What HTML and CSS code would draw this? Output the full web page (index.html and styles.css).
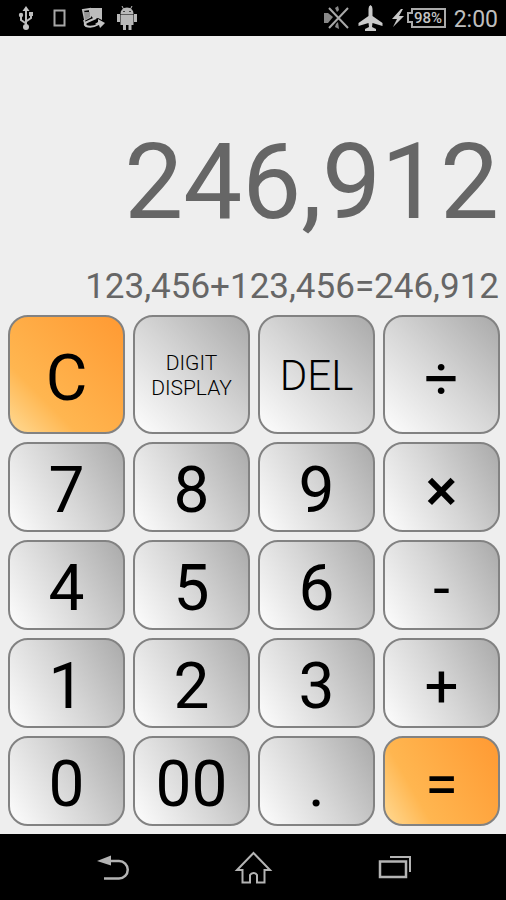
FILE: index.html
```html
<!DOCTYPE html>
<html lang="en">
<head>
<meta charset="utf-8">
<meta name="viewport" content="width=device-width, initial-scale=1">
<title>Calculator</title>
<link rel="stylesheet" href="styles.css">
</head>
<body>
<header class="status">
  <div class="status-group notices">
    <svg width="25" height="36" viewBox="18 0 25 36" aria-hidden="true">
      <g fill="none" stroke="#bcbcbc" stroke-width="2"><path d="M26 10V25M21 16V20L26 23.500M31 15V18L26 21.500"/></g>
      <path fill="#c4c4c4" d="M26 6l3.500 5h-7z"/><circle cx="26" cy="27" r="3" fill="#c4c4c4"/><circle cx="21" cy="15" r="2.200" fill="#bcbcbc"/><path fill="#bcbcbc" d="M29 12h4v4h-4z"/>
    </svg>
    <svg width="18" height="36" viewBox="53 0 18 36" aria-hidden="true">
      <path fill="none" stroke="#a8a8a8" stroke-width="2" d="M54.500 10.500h10v15h-10z"/>
    </svg>
    <svg width="25" height="36" viewBox="81 0 25 36" aria-hidden="true">
      <path fill="#bcbcbc" d="M91 8h11v12l-4-2-4 1-3-3z"/>
      <path fill="none" stroke="#bcbcbc" stroke-width="2" d="M83 10l7-1v8l-5 2.500zM84 20l2 6"/>
      <path fill="#969696" d="M84 12h6v5l-5 3z"/>
      <path fill="none" stroke="#c4c4c4" stroke-width="2" d="M96 18l-9 4q-4 2-1 4 6 2 13-2"/>
      <path fill="#c4c4c4" d="M98 19l7 4-5 5-1-3-4-1 3-2z"/>
    </svg>
    <svg width="22" height="36" viewBox="116 0 22 36" aria-hidden="true">
      <path fill="#b8b8b8" d="M120.500 14q0-6 6.500-6.500 6.500.5 6.500 6.500zM120.500 14.500h13v10.500h-13zM117 14h3v8h-3zM134 14h3v8h-3zM123 24h3v6h-3zM128.500 24h3v6h-3z"/>
      <path stroke="#b8b8b8" stroke-width="1" d="M122 6l2 4M132 6l-2 4"/><path fill="#444" d="M123 11h2v1h-2zM129 11h2v1h-2z"/>
    </svg>
  </div>
  <div class="status-group system">
    <svg width="26" height="36" viewBox="326 0 26 36" aria-hidden="true">
      <path fill="#888" d="M326 13h4l5 4-5 6h-4zM337 8l3-2 1 4-2 2zM338 24l2-2 1 7-4-2z"/>
      <path stroke="#a8a8a8" stroke-width="2" d="M331 8l19 20M350 8l-19 20"/>
    </svg>
    <svg width="26" height="36" viewBox="360 0 26 36" aria-hidden="true">
      <path fill="#cacaca" d="M372.500 5q2 1 2 4v7l10 7v3l-10-3-.5 4 4 2v2h-11v-2l4-2-.5-4-10 3v-3l10-7V9q0-3 2-4z"/>
    </svg>
    <svg width="54" height="36" viewBox="392 0 54 36" aria-hidden="true">
      <path fill="#c8c8c8" d="M401 9l-9 10h5l-4 8 11-11h-5l4-7z"/>
      <path fill="none" stroke="#aaa" stroke-width="2" d="M445 9H412v4h-4v9h4v5h33z"/>
      <text class="charge" x="428" y="23">98%</text>
    </svg>
    <time class="clock">2:00</time>
  </div>
</header>
<main class="calculator">
  <section class="display" aria-label="Display">
    <output class="result">246,912</output>
    <div class="expression">123,456+123,456=246,912</div>
  </section>
  <section class="keypad" aria-label="Keypad">
    <button class="key tall accent" type="button">C</button>
    <button class="key tall small" type="button">DIGIT<br>DISPLAY</button>
    <button class="key tall medium" type="button">DEL</button>
    <button class="key tall operator" type="button">÷</button>
    <button class="key" type="button">7</button>
    <button class="key" type="button">8</button>
    <button class="key" type="button">9</button>
    <button class="key operator times" type="button">×</button>
    <button class="key" type="button">4</button>
    <button class="key" type="button">5</button>
    <button class="key" type="button">6</button>
    <button class="key operator" type="button">-</button>
    <button class="key" type="button">1</button>
    <button class="key" type="button">2</button>
    <button class="key" type="button">3</button>
    <button class="key operator" type="button">+</button>
    <button class="key" type="button">0</button>
    <button class="key" type="button">00</button>
    <button class="key" type="button">.</button>
    <button class="key operator accent" type="button">=</button>
  </section>
</main>
<nav class="navbar" aria-label="System">
  <button class="nav-button" type="button" aria-label="Back">
    <svg width="36" height="36" viewBox="0 0 36 36" aria-hidden="true">
      <path fill="#b4b4b4" d="M4 12l14-5.500v10z"/><path fill="none" stroke="#b4b4b4" stroke-width="2.500" d="M16 12h10a8.500 8.500 0 0 1 0 17.500H11"/>
    </svg>
  </button>
  <button class="nav-button" type="button" aria-label="Home">
    <svg width="40" height="36" viewBox="0 0 40 36" aria-hidden="true">
      <path fill="none" stroke="#b4b4b4" stroke-width="2" d="M20.500 4L4 21H9.500V33.500H17V26a4 4 0 0 1 7 0V33.500H31.500V21H37z"/>
    </svg>
  </button>
  <button class="nav-button" type="button" aria-label="Recent apps">
    <svg width="36" height="36" viewBox="0 0 36 36" aria-hidden="true">
      <path fill="none" stroke="#b4b4b4" stroke-width="2.500" d="M3 12.500h26v15.500h-26z"/><path fill="none" stroke="#b4b4b4" stroke-width="2" d="M13 8h20V23"/>
    </svg>
  </button>
</nav>
</body>
</html>
```
FILE: styles.css
```css
* {
  box-sizing: border-box;
}

body {
  margin: 0;
  min-height: 100vh;
  display: flex;
  flex-direction: column;
  background: #eee;
  color: #000;
  font-family: Roboto, "Liberation Sans", sans-serif;
}

svg {
  display: block;
}

.status {
  display: flex;
  justify-content: space-between;
  height: 36px;
  padding: 0 8px 0 18px;
  background: #000;
  color: #bebebe;
}

.status-group {
  display: flex;
  align-items: center;
}

.notices {
  gap: 10px;
}

.system {
  gap: 8px;
}

.charge {
  font-size: 15px;
  font-weight: 500;
  text-anchor: middle;
  fill: #c4c4c4;
}

.clock {
  padding-top: 2px;
  font-size: 23px;
}

.calculator {
  flex: 1;
  display: flex;
  flex-direction: column;
}

.display {
  flex: 1;
  display: flex;
  flex-direction: column;
  justify-content: flex-end;
  align-items: flex-end;
  padding: 0 7px 7px;
  color: #666;
}

.result {
  font-size: 105px;
  line-height: 122px;
}

.expression {
  margin-top: 22px;
  font-size: 35px;
  line-height: 42px;
}

.keypad {
  display: grid;
  grid-template-columns: repeat(4, 1fr);
  grid-template-rows: 119px;
  grid-auto-rows: 90px;
  gap: 8px;
  padding: 0 6px 8px 8px;
}

.key {
  --angle: 60deg;
  min-width: 0;
  margin: 0;
  padding: 8px 0 0;
  border: 2px solid #828282;
  border-radius: 20px;
  background: linear-gradient(var(--angle), #fff, #d6d6d6 50%, #a8a8a8);
  background-origin: border-box;
  color: #000;
  font-family: inherit;
  font-size: 64px;
  line-height: 72px;
}

.tall {
  --angle: 45deg;
}

.accent {
  background-image: linear-gradient(var(--angle), #ffdc98, #ffb650 30%, #ff9932);
}

.operator {
  font-size: 60px;
}

.times {
  font-weight: 500;
}

.medium {
  padding-top: 3px;
  font-size: 42px;
  font-weight: 300;
}

.small {
  padding-top: 3px;
  font-size: 21px;
  font-weight: 300;
  line-height: 25px;
}

.navbar {
  display: flex;
  justify-content: center;
  align-items: center;
  gap: 104px;
  height: 66px;
  background: #000;
}

.nav-button {
  padding: 0;
  border: 0;
  background: none;
}
```
